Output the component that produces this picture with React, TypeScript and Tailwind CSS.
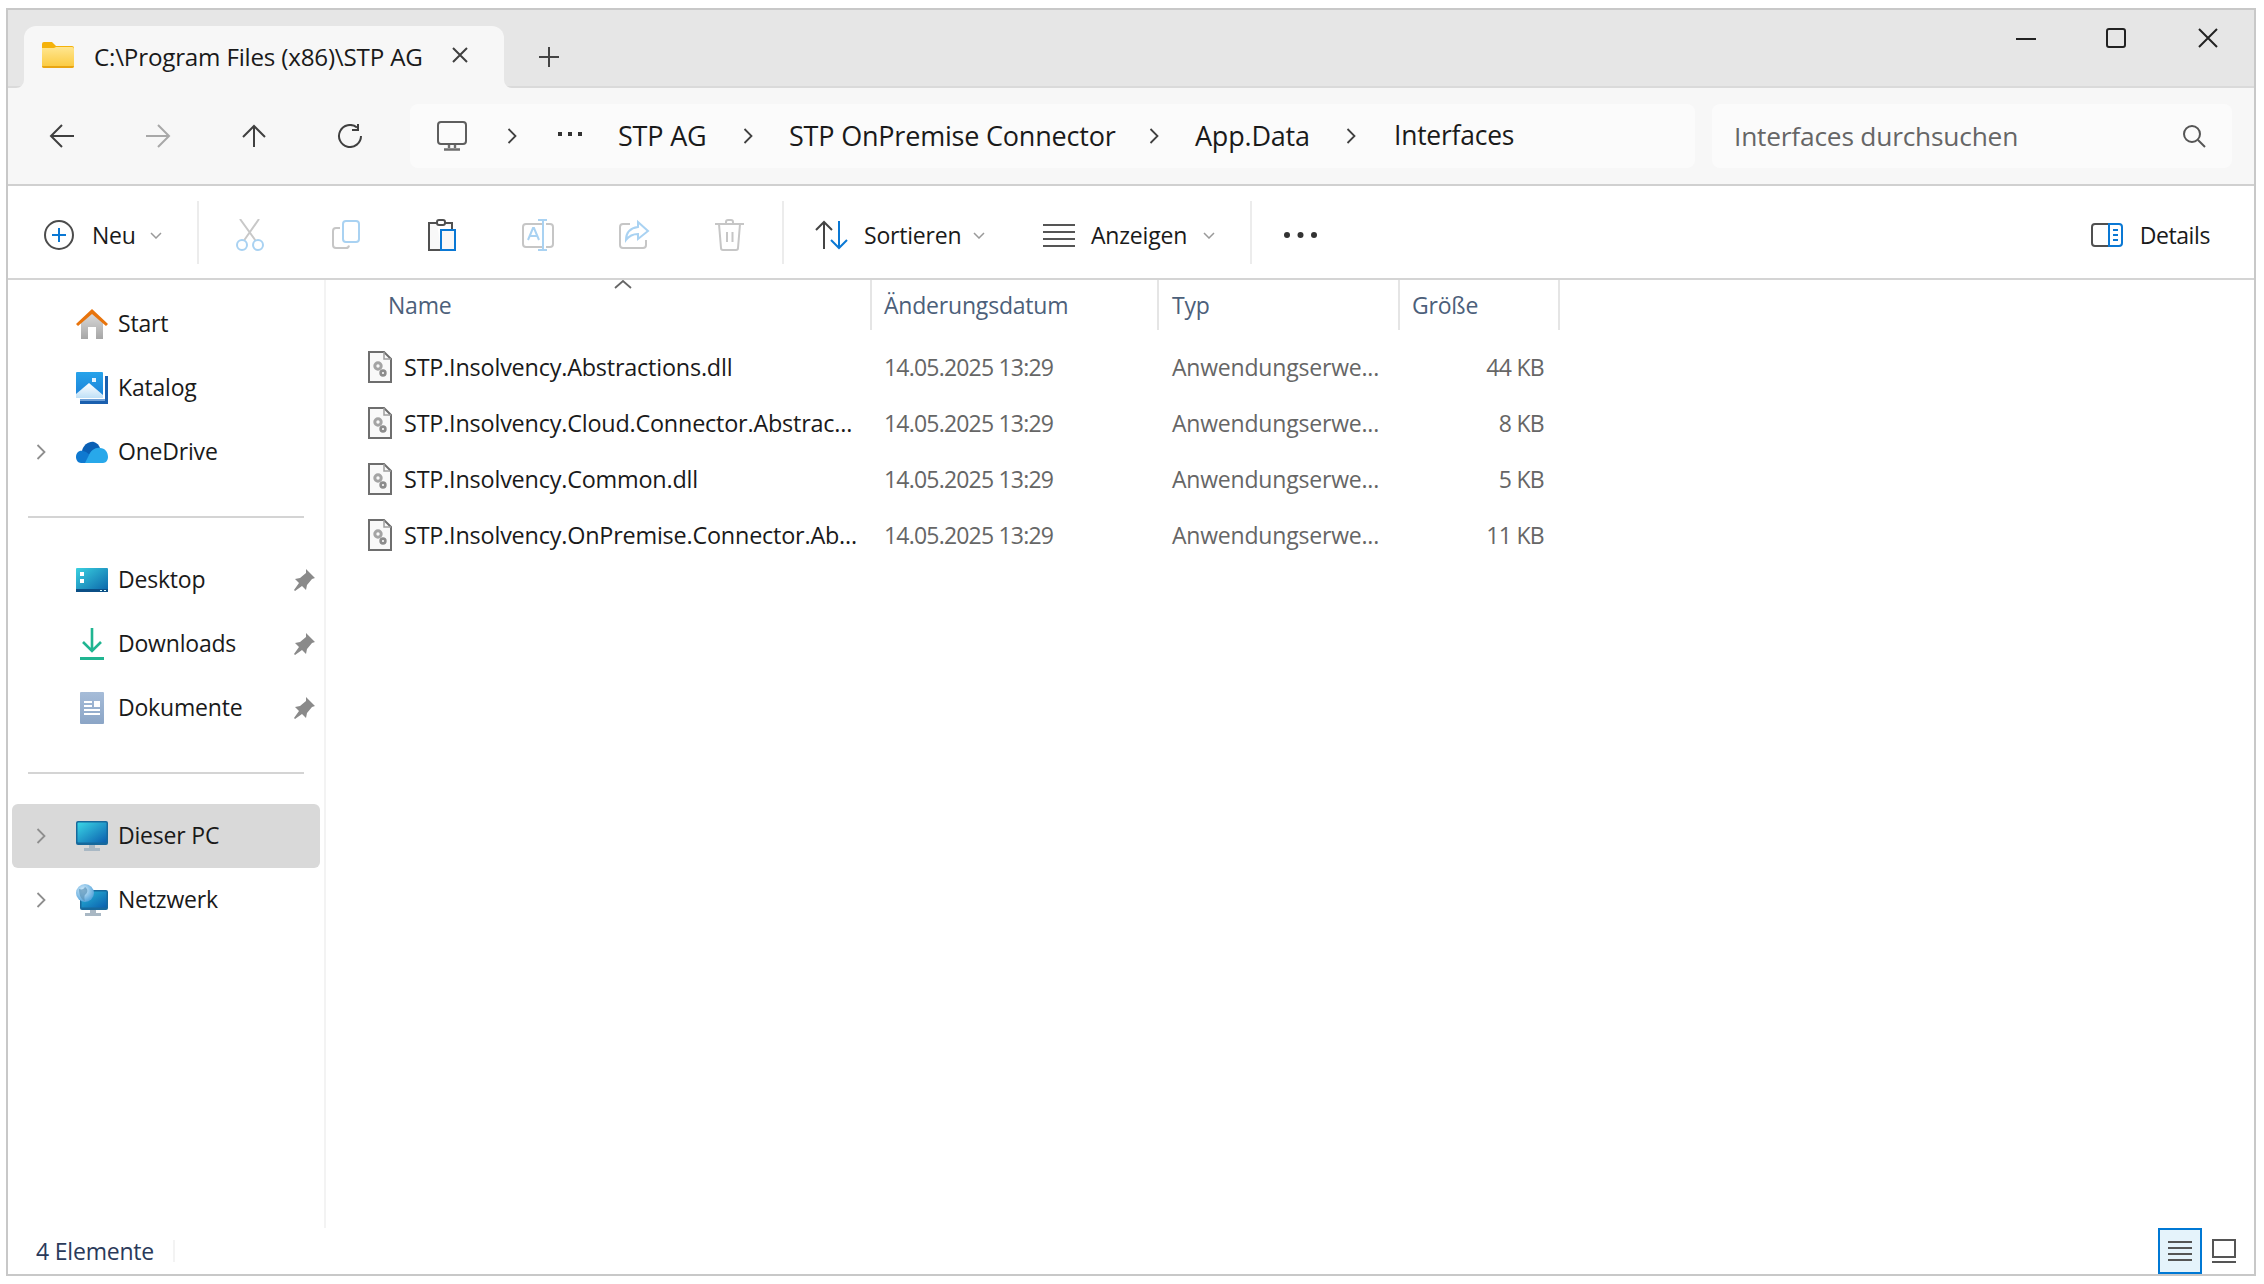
import type { ReactNode } from "react";

const Chevron = ({ className = "" }: { className?: string }) => (
  <svg viewBox="0 0 10 16" className={className} fill="none" stroke="currentColor" strokeWidth="1.8">
    <path d="M1.5 1l7 7-7 7" />
  </svg>
);

const DropChevron = ({ className = "" }: { className?: string }) => (
  <svg viewBox="0 0 12 7" className={`h-[7px] w-[12px] text-[#9a9a9a] ${className}`} fill="none" stroke="currentColor" strokeWidth="1.5">
    <path d="M1 1l5 5 5-5" />
  </svg>
);

const FolderIcon = () => (
  <svg viewBox="0 0 32 26" className="mb-[4px] h-[26px] w-[32px] shrink-0">
    <defs>
      <linearGradient id="fold" x1="0" y1="0" x2="0" y2="1">
        <stop offset="0" stopColor="#ffe690" />
        <stop offset="1" stopColor="#fbc93c" />
      </linearGradient>
    </defs>
    <path d="M0 2a2 2 0 012-2h8l4 4h16a2 2 0 012 2v4H0z" fill="#f5b20a" />
    <path d="M0 6h12l2-1h16a2 2 0 012 2v17a2 2 0 01-2 2H2a2 2 0 01-2-2z" fill="url(#fold)" />
    <path d="M0 24h32a2 2 0 01-2 2H2a2 2 0 01-2-2z" fill="#e9a512" />
  </svg>
);

const NavArrow = ({ d, color = "#404040" }: { d: string; color?: string }) => (
  <svg viewBox="0 0 26 24" className="h-[24px] w-[26px]" fill="none" stroke={color} strokeWidth="2">
    <path d={d} />
  </svg>
);

const ComputerIcon = () => (
  <svg viewBox="0 0 30 30" className="h-[30px] w-[30px]" fill="none">
    <rect x="1" y="1" width="28" height="22" rx="3" stroke="#5e5e5e" strokeWidth="2" />
    <path d="M12 24v3M18 24v3M7 28.5h16" stroke="#6e6e6e" strokeWidth="2.4" />
  </svg>
);

const ToolIcon = ({ children }: { children: ReactNode }) => (
  <svg viewBox="0 0 32 32" className="h-[32px] w-[32px]" fill="none" strokeWidth="2">
    {children}
  </svg>
);

const toolIcons: ReactNode[] = [
  <ToolIcon key="cut">
    <path d="M6 0l15.5 21.5M25 0L10 21.5" stroke="#c8c8c8" />
    <circle cx="8" cy="26" r="5" stroke="#a9d2f2" />
    <circle cx="24" cy="26" r="5" stroke="#a9d2f2" />
  </ToolIcon>,
  <ToolIcon key="copy">
    <path d="M10 9H6a3 3 0 00-3 3v14a3 3 0 003 3h10a3 3 0 003-2.5" stroke="#c6c6c6" />
    <rect x="13" y="2" width="16" height="21" rx="3" stroke="#a9d2f2" />
  </ToolIcon>,
  <ToolIcon key="paste">
    <path d="M15 31H3V4h8M19 4h7v6" fill="#f8f8f8" stroke="#505050" />
    <rect x="11" y="1" width="8" height="5" rx="2" stroke="#505050" />
    <rect x="15" y="11" width="14" height="20" fill="#f8f8f8" stroke="#0a78d4" />
  </ToolIcon>,
  <ToolIcon key="rename">
    <path d="M20 5H4a3 3 0 00-3 3v17a3 3 0 003 3h16M24 5h4a3 3 0 013 3v17a3 3 0 01-3 3h-4" stroke="#c6c6c6" />
    <path d="M16 1h9M16 31h9M21 1v30" stroke="#a9d2f2" />
    <path d="M6 21l5-12h1l5 12M8 17h7" stroke="#a9d2f2" />
  </ToolIcon>,
  <ToolIcon key="share">
    <path d="M12 5H5a3 3 0 00-3 3v18a3 3 0 003 3h20a3 3 0 003-3v-5" stroke="#c6c6c6" />
    <path d="M20 3l10 9-10 8v-5c-5 0-9 2-12 6 0-8 5-12 12-13z" stroke="#a9d2f2" />
  </ToolIcon>,
  <ToolIcon key="delete">
    <path d="M1 5h29M12 5V3a2 2 0 012-2h3a2 2 0 012 2v2M5 5l2 24a2 2 0 002 2h13a2 2 0 002-2l2-24M13 13v10M18.5 13v10" stroke="#c6c6c6" />
  </ToolIcon>,
];

const GearFile = () => (
  <svg viewBox="0 0 24 32" className="h-[32px] w-[24px] shrink-0" fill="none">
    <path d="M1 1h15l7 7v23H1z" fill="#f9f9f9" stroke="#6e6e6e" strokeWidth="2" />
    <path d="M16 1v7h7" stroke="#a0a0a0" strokeWidth="1.5" />
    <circle cx="10" cy="15" r="3.2" stroke="#a4a4a4" strokeWidth="3" />
    <circle cx="15" cy="22" r="2.4" stroke="#8c8c8c" strokeWidth="2.6" />
  </svg>
);

const HomeIcon = () => (
  <svg viewBox="0 0 32 30" className="h-[30px] w-[32px]">
    <defs>
      <linearGradient id="homeBody" x1="0" y1="0" x2="0" y2="1">
        <stop offset="0" stopColor="#dcdcdc" />
        <stop offset="1" stopColor="#a6a6a6" />
      </linearGradient>
    </defs>
    <path d="M5 13L16 3l11 10v17h-7V18h-8v12H5z" fill="url(#homeBody)" />
    <path d="M0 15L16 0l16 15-2 2L16 5 2 17z" fill="#e8740c" />
  </svg>
);

const GalleryIcon = () => (
  <svg viewBox="0 0 32 32" className="h-[32px] w-[32px]">
    <defs>
      <linearGradient id="gal" x1="0" y1="0" x2="0" y2="1">
        <stop offset="0" stopColor="#27a3ea" />
        <stop offset="1" stopColor="#1b7fd6" />
      </linearGradient>
      <linearGradient id="galMt" x1="0" y1="0" x2="0" y2="1">
        <stop offset="0" stopColor="#ffffff" />
        <stop offset="1" stopColor="#bfe0f7" />
      </linearGradient>
    </defs>
    <path d="M29 4h3v28H4v-3h25z" fill="#1a5fae" />
    <path d="M4 29h25V27H4z" fill="#6da0d8" />
    <rect x="0" y="0" width="27" height="26" rx="1" fill="url(#gal)" />
    <path d="M0 22l13-11 14 12v3H0z" fill="url(#galMt)" />
    <rect x="16" y="6" width="4" height="4" fill="#e6f4ff" />
  </svg>
);

const CloudIcon = () => (
  <svg viewBox="0 0 32 22" className="h-[22px] w-[32px]">
    <path d="M6 10c1-6 7-10 12-9 3 1 5 3 6 6l-8 6-6 2z" fill="#0a5fb4" />
    <path d="M0 16c0-4 3-7 7-6l3 1 8 6 6 5H5c-3 0-5-3-5-6z" fill="#0f79d0" />
    <path d="M13 14c2-5 7-8 11-7 5 0 8 4 8 9 0 3-2 6-5 6H9z" fill="#28a8ea" />
  </svg>
);

const DesktopIcon = () => (
  <svg viewBox="0 0 32 24" className="h-[24px] w-[32px]">
    <defs>
      <linearGradient id="desk" x1="0" y1="0" x2="1" y2="1">
        <stop offset="0" stopColor="#3ad1e0" />
        <stop offset="1" stopColor="#0a62a8" />
      </linearGradient>
    </defs>
    <rect width="32" height="24" rx="1" fill="url(#desk)" />
    <rect y="21" width="32" height="3" fill="#0b4f86" />
    <rect x="4" y="4" width="4" height="4" fill="#fff" />
    <rect x="4" y="11" width="4" height="4" fill="#fff" />
    <rect x="24" y="22" width="2" height="1" fill="#dff" />
    <rect x="28" y="22" width="2" height="1" fill="#dff" />
  </svg>
);

const DownloadIcon = () => (
  <svg viewBox="0 0 24 32" className="h-[32px] w-[24px]" fill="none" stroke="#20b591" strokeWidth="2.6">
    <path d="M12 0v22M3 14l9 9 9-9" />
    <path d="M0 30.5h24" strokeWidth="3" />
  </svg>
);

const DocsIcon = () => (
  <svg viewBox="0 0 24 32" className="h-[32px] w-[24px]">
    <defs>
      <linearGradient id="docs" x1="0" y1="0" x2="0" y2="1">
        <stop offset="0" stopColor="#a6bcd8" />
        <stop offset="1" stopColor="#8ba5c6" />
      </linearGradient>
    </defs>
    <rect width="24" height="32" rx="1" fill="url(#docs)" />
    <path d="M4 9h8v2H4zM4 13h8v2H4zM4 17h16v2H4zM4 21h16v2H4z" fill="#fff" />
    <rect x="14" y="9" width="6" height="6" fill="#fff" />
  </svg>
);

const MonitorIcon = ({ id, className = "" }: { id: string; className?: string }) => (
  <svg viewBox="0 0 32 30" className={`h-[30px] w-[32px] ${className}`}>
    <defs>
      <linearGradient id={id} x1="0" y1="0" x2="1" y2="1">
        <stop offset="0" stopColor="#3ad6e6" />
        <stop offset="1" stopColor="#0b5fae" />
      </linearGradient>
    </defs>
    <path d="M13 23h6v4h5v3H8v-3h5z" fill="#a9b8c4" />
    <rect width="32" height="24" rx="2" fill="#17699c" />
    <rect x="1.5" y="1.5" width="29" height="20" rx="1" fill={`url(#${id})`} />
  </svg>
);

const NetworkIcon = () => (
  <svg viewBox="0 0 32 32" className="h-[32px] w-[32px]">
    <defs>
      <linearGradient id="netScreen" x1="0" y1="0" x2="1" y2="1">
        <stop offset="0" stopColor="#28b8d8" />
        <stop offset="1" stopColor="#0b5fae" />
      </linearGradient>
      <radialGradient id="globe" cx="0.4" cy="0.35" r="0.7">
        <stop offset="0" stopColor="#d8eefc" />
        <stop offset="1" stopColor="#4a9ed8" />
      </radialGradient>
    </defs>
    <path d="M14 25h6v4h5v3H9v-3h5z" fill="#a9b8c4" />
    <rect x="4" y="6" width="28" height="20" rx="2" fill="#17699c" />
    <rect x="5.5" y="7.5" width="25" height="16" fill="url(#netScreen)" />
    <circle cx="9" cy="9" r="9" fill="url(#globe)" />
    <path d="M3 5c3 1 5 0 6-2 3 2 3 5 1 7-2 1-2 4-1 7-4-1-6-6-6-12z" fill="#5a93b8" opacity="0.7" />
  </svg>
);

const PinIcon = () => (
  <svg viewBox="0 0 22 22" className="h-[22px] w-[22px]">
    <path d="M13 0l9 9-3 1-5 6-1 5-4-4-7 5-1-1 5-7-4-4 5-1 6-5z" fill="#8a8a8a" />
  </svg>
);

type SideRow = { label: string; icon: ReactNode; chevron?: boolean; pin?: boolean; active?: boolean };

const SideItem = ({ row }: { row: SideRow }) => (
  <div className={`ml-1 flex h-[64px] w-[308px] items-center rounded-md ${row.active ? "bg-[#d9d9d9]" : ""}`}>
    <div className="flex w-[64px] shrink-0 pl-[24px]">
      {row.chevron && <Chevron className="h-[16px] w-[10px] text-[#8e8e8e]" />}
    </div>
    <div className="flex w-[32px] shrink-0 justify-center">{row.icon}</div>
    <span className="mb-[2px] ml-[10px] text-[#1a1a1a]">{row.label}</span>
    {row.pin && (
      <span className="ml-auto mr-[5px]">
        <PinIcon />
      </span>
    )}
  </div>
);

const files = [
  { name: "STP.Insolvency.Abstractions.dll", size: "44 KB" },
  { name: "STP.Insolvency.Cloud.Connector.Abstrac...", size: "8 KB" },
  { name: "STP.Insolvency.Common.dll", size: "5 KB" },
  { name: "STP.Insolvency.OnPremise.Connector.Ab...", size: "11 KB" },
];

const crumbs = [
  { label: "STP AG", width: "w-[89px]" },
  { label: "STP OnPremise Connector", width: "w-[324px]" },
  { label: "App.Data", width: "w-[115px]" },
];

export default function App() {
  return (
    <div className="h-[1284px] w-[2264px] bg-white pl-[6px] pt-[8px] font-['Open_Sans',sans-serif] text-[23px] tracking-[-0.2px] text-[#1a1a1a]">
      <div className="flex h-[1268px] w-[2250px] flex-col border-2 border-[#c8c8c8]">
        {/* Title bar */}
        <div className="flex h-[78px] shrink-0 items-start border-b-2 border-[#dadada] bg-[#e6e6e6] pl-4 pt-4">
          <div className="relative flex h-[62px] w-[480px] items-center rounded-t-[12px] bg-[#f7f7f7] pl-[18px]">
            <svg viewBox="0 0 8 8" className="absolute bottom-0 left-[-8px] h-[8px] w-[8px]" fill="#f7f7f7">
              <path d="M8 0v8H0a8 8 0 008-8z" />
            </svg>
            <svg viewBox="0 0 8 8" className="absolute bottom-0 right-[-8px] h-[8px] w-[8px]" fill="#f7f7f7">
              <path d="M0 0v8h8a8 8 0 01-8-8z" />
            </svg>
            <FolderIcon />
            <span className="ml-[20px] w-[329px] whitespace-nowrap text-[24.2px]">C:\Program Files (x86)\STP AG</span>
            <svg viewBox="0 0 18 18" className="mb-[4px] ml-[28px] h-[18px] w-[18px]" fill="none" stroke="#404040" strokeWidth="2">
              <path d="M2 2l14 14M16 2L2 16" />
            </svg>
          </div>
          <svg viewBox="0 0 20 20" className="ml-[35px] mt-[21px] h-[20px] w-[20px]" fill="none" stroke="#444" strokeWidth="2">
            <path d="M10 0v20M0 10h20" />
          </svg>
          <div className="ml-auto mt-[2px] flex items-center pr-[36px]">
            <svg viewBox="0 0 20 20" className="h-[20px] w-[20px]" fill="none" stroke="#222" strokeWidth="2">
              <path d="M0 11h20" />
            </svg>
            <svg viewBox="0 0 20 20" className="ml-[70px] h-[20px] w-[20px]" fill="none" stroke="#222" strokeWidth="2">
              <rect x="1" y="1" width="18" height="18" rx="2" />
            </svg>
            <svg viewBox="0 0 20 20" className="ml-[72px] h-[20px] w-[20px]" fill="none" stroke="#222" strokeWidth="2">
              <path d="M1 1l18 18M19 1L1 19" />
            </svg>
          </div>
        </div>

        {/* Address row */}
        <div className="flex h-[98px] shrink-0 items-center border-b-2 border-[#d0d0d0] bg-[#f7f7f7] pl-[6px]">
          <div className="flex w-[96px] justify-center">
            <NavArrow d="M25 12H2M13 1L2 12l11 11" />
          </div>
          <div className="flex w-[96px] justify-center">
            <NavArrow d="M1 12h23M13 1l11 11-11 11" color="#a8a8a8" />
          </div>
          <div className="flex w-[96px] justify-center">
            <NavArrow d="M13 23V2M2 13L13 2l11 11" />
          </div>
          <div className="flex w-[96px] justify-center">
            <NavArrow d="M20 3.5A11 11 0 1024 12M21 0v6h-6" />
          </div>
          <div className="ml-[12px] flex h-[64px] w-[1285px] items-center rounded-lg bg-[#fbfbfb] pl-[27px] text-[27px]">
            <ComputerIcon />
            <Chevron className="ml-[40px] h-[16px] w-[10px] text-[#404040]" />
            <svg viewBox="0 0 24 4" className="mb-[4px] ml-[41px] h-[4px] w-[24px]" fill="#333">
              <rect x="0" width="4" height="4" />
              <rect x="10" width="4" height="4" />
              <rect x="20" width="4" height="4" />
            </svg>
            {crumbs.map((c) => (
              <div key={c.label} className="flex items-center">
                <span className={`ml-[36px] whitespace-nowrap ${c.width}`}>{c.label}</span>
                <Chevron className="ml-[36px] h-[16px] w-[10px] text-[#404040]" />
              </div>
            ))}
            <span className="ml-[38px] whitespace-nowrap text-[26.4px]">Interfaces</span>
          </div>
          <div className="ml-[17px] flex h-[64px] w-[520px] items-center rounded-lg bg-[#fbfbfb] pl-[22px] pr-[26px] text-[26.3px] text-[#666666]">
            <span className="mt-[2px] whitespace-nowrap">Interfaces durchsuchen</span>
            <svg viewBox="0 0 24 24" className="ml-auto h-[24px] w-[24px]" fill="none" stroke="#555" strokeWidth="2">
              <circle cx="10" cy="10" r="8" />
              <path d="M16 16l7 7" />
            </svg>
          </div>
        </div>

        {/* Toolbar */}
        <div className="flex h-[94px] shrink-0 items-center border-b-2 border-[#d4d4d4] bg-white pl-[36px] pr-[44px] pt-[6px]">
          <svg viewBox="0 0 30 30" className="h-[30px] w-[30px]" fill="none">
            <circle cx="15" cy="15" r="14" stroke="#4c4c4c" strokeWidth="2" />
            <path d="M15 8v14M8 15h14" stroke="#0a78d4" strokeWidth="2" />
          </svg>
          <span className="ml-[18px] w-[44px]">Neu</span>
          <DropChevron className="ml-[14px]" />
          <div className="mb-[5px] ml-[35px] h-[63px] w-[2px] bg-[#ececec]" />
          <div className="ml-[3px] flex">
            {toolIcons.map((icon, i) => (
              <div key={i} className="flex w-[96px] justify-center">
                {icon}
              </div>
            ))}
          </div>
          <div className="mb-[5px] ml-[4px] h-[63px] w-[2px] bg-[#ececec]" />
          <svg viewBox="0 0 34 30" className="ml-[31px] h-[30px] w-[34px]" fill="none" strokeWidth="2">
            <path d="M9 29V2M1 10l8-8 8 8" stroke="#444" />
            <path d="M24 1v27M16 20l8 8 8-8" stroke="#0a78d4" />
          </svg>
          <span className="ml-[15px] w-[96px] whitespace-nowrap">Sortieren</span>
          <DropChevron className="ml-[13px]" />
          <svg viewBox="0 0 32 24" className="ml-[58px] h-[24px] w-[32px]" fill="none" stroke="#555" strokeWidth="2">
            <path d="M0 2h32M0 9h32M0 16h32M0 23h32" />
          </svg>
          <span className="ml-[16px] w-[98px] whitespace-nowrap">Anzeigen</span>
          <DropChevron className="ml-[14px]" />
          <div className="mb-[5px] ml-[35px] h-[63px] w-[2px] bg-[#ececec]" />
          <svg viewBox="0 0 33 6" className="ml-[32px] h-[6px] w-[33px]" fill="#333">
            <rect x="0" width="6" height="6" rx="3" />
            <rect x="13.5" width="6" height="6" rx="3" />
            <rect x="27" width="6" height="6" rx="3" />
          </svg>
          <div className="ml-auto flex items-center">
            <svg viewBox="0 0 32 24" className="h-[24px] w-[32px]" fill="none">
              <path d="M18 1H4a3 3 0 00-3 3v16a3 3 0 003 3h14" stroke="#505050" strokeWidth="2" />
              <path d="M18 1h10a3 3 0 013 3v16a3 3 0 01-3 3H18zM22 7h5M22 12h5M22 17h5" stroke="#0a78d4" strokeWidth="2" />
            </svg>
            <span className="ml-[17px] tracking-[-0.4px]">Details</span>
          </div>
        </div>

        {/* Body */}
        <div className="flex min-h-0 flex-1">
          <div className="w-[318px] shrink-0 border-r-2 border-[#f3f3f3] pt-[12px]">
            <SideItem row={{ label: "Start", icon: <HomeIcon /> }} />
            <SideItem row={{ label: "Katalog", icon: <GalleryIcon /> }} />
            <SideItem row={{ label: "OneDrive", icon: <CloudIcon />, chevron: true }} />
            <div className="ml-5 mt-[32px] h-[2px] w-[276px] bg-[#d4d4d4]" />
            <div className="mt-[30px]">
              <SideItem row={{ label: "Desktop", icon: <DesktopIcon />, pin: true }} />
              <SideItem row={{ label: "Downloads", icon: <DownloadIcon />, pin: true }} />
              <SideItem row={{ label: "Dokumente", icon: <DocsIcon />, pin: true }} />
            </div>
            <div className="ml-5 mt-[32px] h-[2px] w-[276px] bg-[#d4d4d4]" />
            <div className="mt-[30px]">
              <SideItem row={{ label: "Dieser PC", icon: <MonitorIcon id="pcScreen" />, chevron: true, active: true }} />
              <SideItem row={{ label: "Netzwerk", icon: <NetworkIcon />, chevron: true }} />
            </div>
          </div>

          <div className="min-w-0 flex-1">
            <div className="flex h-[50px] text-[#4c607a]">
              <div className="relative flex w-[546px] items-center border-r-2 border-[#e5e5e5] pl-[62px]">
                Name
                <svg viewBox="0 0 18 9" className="absolute left-[288px] top-0 h-[9px] w-[18px]" fill="none" stroke="#666" strokeWidth="1.8">
                  <path d="M1 8l8-7 8 7" />
                </svg>
              </div>
              <div className="flex w-[287px] items-center border-r-2 border-[#e5e5e5] pl-[12px]">Änderungsdatum</div>
              <div className="flex w-[241px] items-center border-r-2 border-[#e5e5e5] pl-[13px]">Typ</div>
              <div className="flex w-[160px] items-center border-r-2 border-[#e5e5e5] pl-[12px]">Größe</div>
            </div>
            <div className="mt-[9px]">
              {files.map((f) => (
                <div key={f.name} className="flex h-[56px] items-center">
                  <div className="flex w-[546px] items-center pl-[42px]">
                    <GearFile />
                    <span className="ml-[12px] mt-[2px] whitespace-nowrap text-[23.4px]">{f.name}</span>
                  </div>
                  <div className="w-[287px] whitespace-nowrap pl-[12px] tracking-[-0.8px] text-[#666666]">14.05.2025 13:29</div>
                  <div className="w-[241px] whitespace-nowrap pl-[13px] text-[#666666]">Anwendungserwe...</div>
                  <div className="w-[144px] text-right tracking-[-0.7px] text-[#666666]">{f.size}</div>
                </div>
              ))}
            </div>
          </div>
        </div>

        {/* Status bar */}
        <div className="flex h-[46px] shrink-0 items-center pl-[28px] text-[#2a3a5a]">
          <span className="w-[117px] whitespace-nowrap">4 Elemente</span>
          <div className="ml-[20px] h-[22px] w-[2px] bg-[#f3f3f3]" />
          <div className="ml-auto flex h-[46px] w-[44px] items-center justify-center border-2 border-[#0078d4] bg-[#e5f3fb]">
            <svg viewBox="0 0 24 20" className="h-[20px] w-[24px]" fill="none" stroke="#555" strokeWidth="2">
              <path d="M0 1h24M0 7h24M0 13h24M0 19h24" />
            </svg>
          </div>
          <svg viewBox="0 0 24 24" className="ml-[10px] mr-[18px] h-[24px] w-[24px]" fill="none" stroke="#555" strokeWidth="2">
            <rect x="1" y="1" width="22" height="17" />
            <path d="M0 23h24" />
          </svg>
        </div>
      </div>
    </div>
  );
}
